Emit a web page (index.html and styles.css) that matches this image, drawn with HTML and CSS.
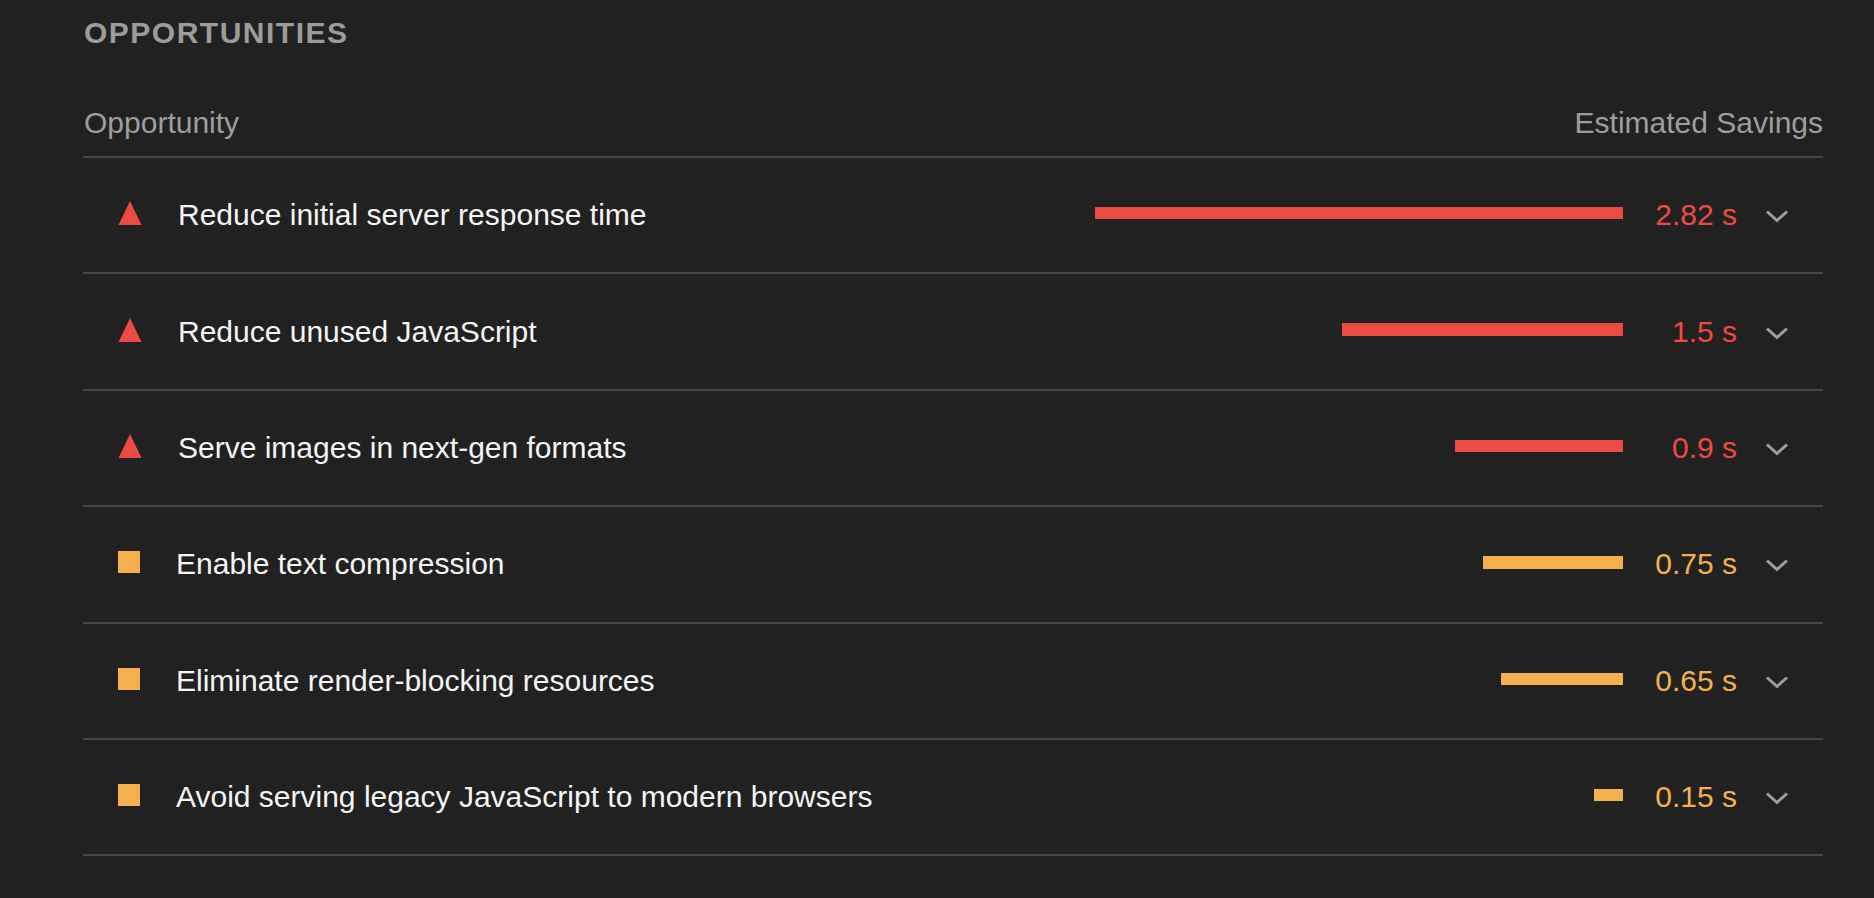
FILE: index.html
```html
<!DOCTYPE html>
<html lang="en">
<head>
<meta charset="utf-8">
<title>Opportunities</title>
<link rel="stylesheet" href="styles.css">
</head>
<body>
<section class="group">
  <h2 class="group-title">Opportunities</h2>
  <div class="table-head">
    <span>Opportunity</span>
    <span>Estimated Savings</span>
  </div>
  <div class="audit fail">
    <svg class="icon tri" viewBox="0 0 24 24" width="24" height="24"><polygon points="12,0 23.5,24 0.5,24"/></svg>
    <span class="label">Reduce initial server response time</span>
    <div class="spark"><div class="bar" style="width:528px"></div></div>
    <span class="value">2.82&nbsp;s</span>
    <svg class="chev" viewBox="0 0 24 14" width="24" height="14"><path d="M2 2.5 L12 11.5 L22 2.5"/></svg>
  </div>
  <div class="audit fail">
    <svg class="icon tri" viewBox="0 0 24 24" width="24" height="24"><polygon points="12,0 23.5,24 0.5,24"/></svg>
    <span class="label">Reduce unused JavaScript</span>
    <div class="spark"><div class="bar" style="width:281px"></div></div>
    <span class="value">1.5&nbsp;s</span>
    <svg class="chev" viewBox="0 0 24 14" width="24" height="14"><path d="M2 2.5 L12 11.5 L22 2.5"/></svg>
  </div>
  <div class="audit fail">
    <svg class="icon tri" viewBox="0 0 24 24" width="24" height="24"><polygon points="12,0 23.5,24 0.5,24"/></svg>
    <span class="label">Serve images in next-gen formats</span>
    <div class="spark"><div class="bar" style="width:168.5px"></div></div>
    <span class="value">0.9&nbsp;s</span>
    <svg class="chev" viewBox="0 0 24 14" width="24" height="14"><path d="M2 2.5 L12 11.5 L22 2.5"/></svg>
  </div>
  <div class="audit avg">
    <span class="icon sq"></span>
    <span class="label">Enable text compression</span>
    <div class="spark"><div class="bar" style="width:140.4px"></div></div>
    <span class="value">0.75&nbsp;s</span>
    <svg class="chev" viewBox="0 0 24 14" width="24" height="14"><path d="M2 2.5 L12 11.5 L22 2.5"/></svg>
  </div>
  <div class="audit avg">
    <span class="icon sq"></span>
    <span class="label">Eliminate render-blocking resources</span>
    <div class="spark"><div class="bar" style="width:121.7px"></div></div>
    <span class="value">0.65&nbsp;s</span>
    <svg class="chev" viewBox="0 0 24 14" width="24" height="14"><path d="M2 2.5 L12 11.5 L22 2.5"/></svg>
  </div>
  <div class="audit avg">
    <span class="icon sq"></span>
    <span class="label">Avoid serving legacy JavaScript to modern browsers</span>
    <div class="spark"><div class="bar" style="width:28.6px"></div></div>
    <span class="value">0.15&nbsp;s</span>
    <svg class="chev" viewBox="0 0 24 14" width="24" height="14"><path d="M2 2.5 L12 11.5 L22 2.5"/></svg>
  </div>
</section>
</body>
</html>
```
FILE: styles.css
```css
html, body {
  margin: 0;
  background: #212121;
}
body {
  padding: 16px 51px 0 83px;
  font-family: "Liberation Sans", Arial, Helvetica, sans-serif;
  font-size: 30px;
  line-height: 34px;
  color: #f5f5f5;
}
.group-title {
  margin: 0 0 0 1px;
  font-size: 30px;
  line-height: 34px;
  font-weight: bold;
  letter-spacing: 1.5px;
  text-transform: uppercase;
  color: #9c9c9c;
}
.table-head {
  display: flex;
  justify-content: space-between;
  margin-top: 56px;
  padding: 0 0 16px 1px;
  border-bottom: 2px solid #464646;
  color: #9e9e9e;
}
.audit {
  box-sizing: border-box;
  height: 116.4px;
  display: flex;
  align-items: center;
  padding: 0 34px 0 35px;
  border-bottom: 2px solid #464646;
}
.icon {
  flex: none;
  margin-bottom: 4px;
}
.tri {
  margin-right: 36px;
}
.fail .tri polygon {
  fill: #eb4b43;
}
.sq {
  width: 22px;
  height: 22px;
  margin-right: 36px;
  background: #f4b04e;
}
.label {
  flex: 1;
  white-space: nowrap;
}
.spark {
  width: 528px;
  display: flex;
  justify-content: flex-end;
  margin-bottom: 4px;
}
.bar {
  height: 12.5px;
}
.fail .bar { background: #eb4b43; }
.avg .bar { background: #f4b04e; }
.value {
  width: 114px;
  text-align: right;
  margin-right: 28px;
}
.fail .value { color: #eb4b43; }
.avg .value { color: #f4b04e; }
.chev {
  flex: none;
  margin-top: 2px;
}
.chev path {
  fill: none;
  stroke: #9e9e9e;
  stroke-width: 3;
}
```
